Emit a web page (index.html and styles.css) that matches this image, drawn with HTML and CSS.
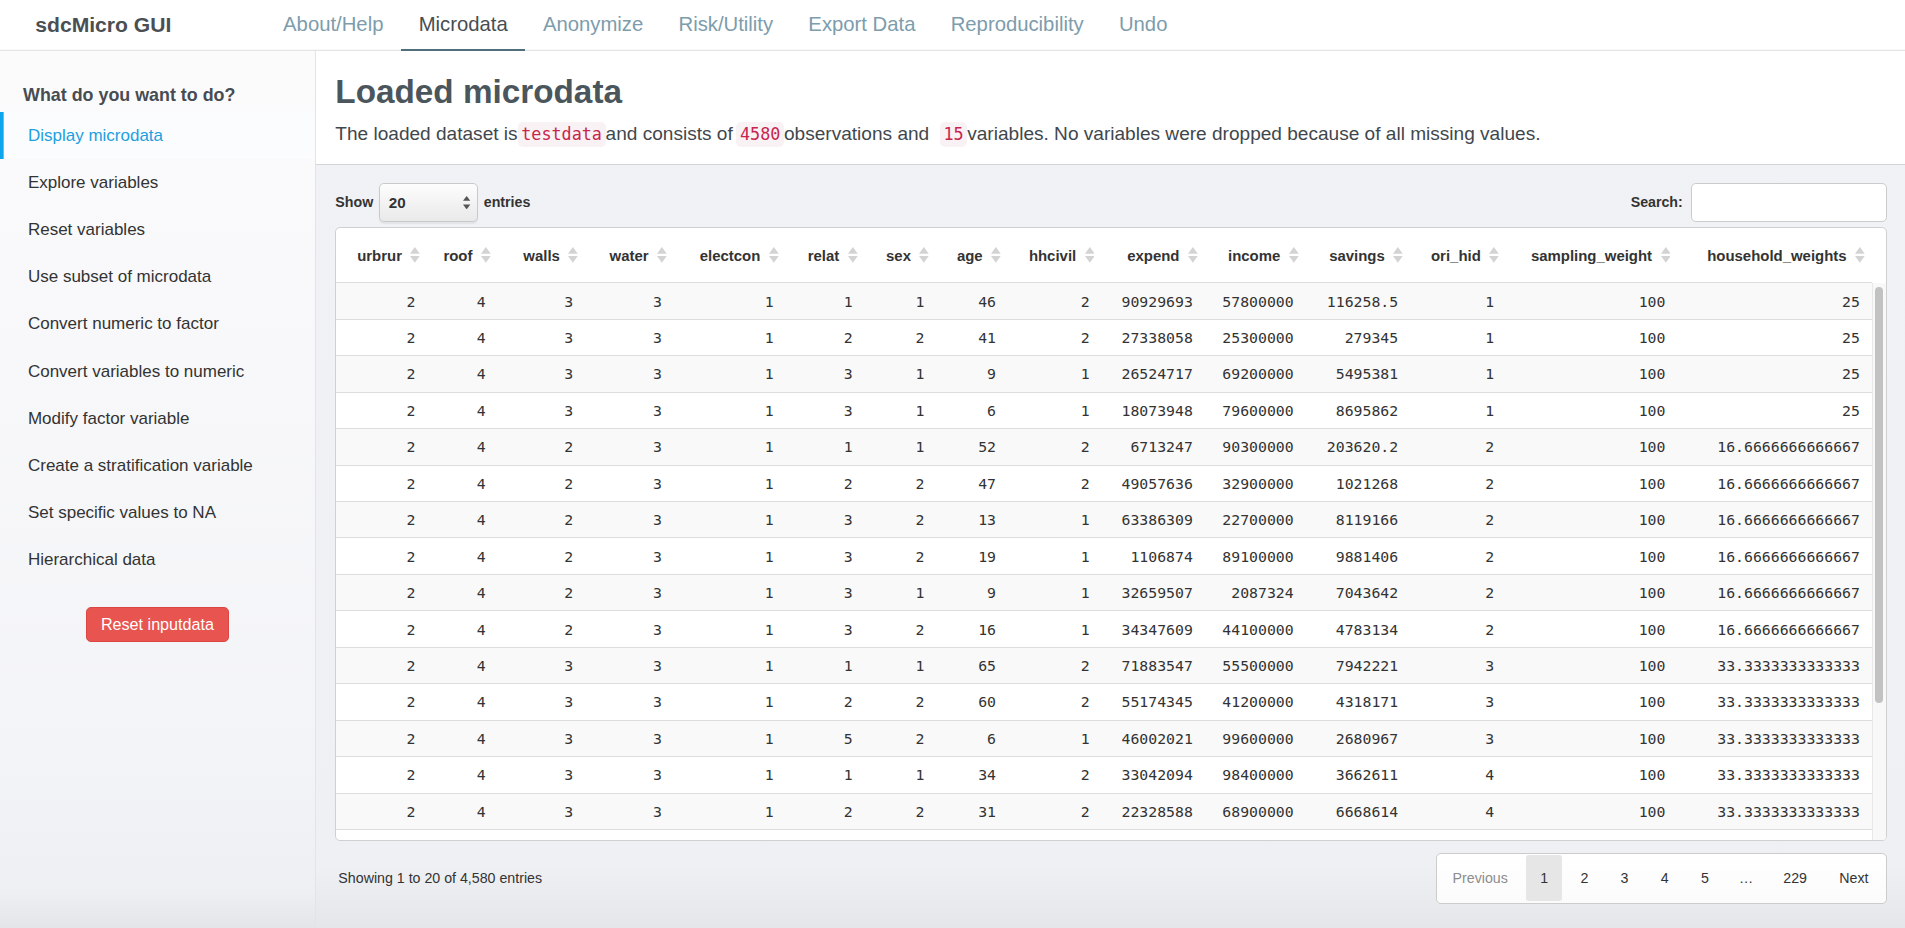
FILE: index.html
```html
<!DOCTYPE html>
<html lang="en">
<head>
<meta charset="utf-8">
<title>sdcMicro GUI</title>
<link rel="stylesheet" href="styles.css">
</head>
<body>
<header class="navbar">
  <div class="brand">sdcMicro GUI</div>
  <nav class="nav">
    <a class="nav-link">About/Help</a>
    <a class="nav-link active">Microdata</a>
    <a class="nav-link">Anonymize</a>
    <a class="nav-link">Risk/Utility</a>
    <a class="nav-link">Export Data</a>
    <a class="nav-link">Reproducibility</a>
    <a class="nav-link">Undo</a>
  </nav>
</header>
<div class="layout">
  <aside class="sidebar">
    <h4 class="side-title">What do you want to do?</h4>
    <ul class="side-menu">
      <li class="side-item active">Display microdata</li>
      <li class="side-item">Explore variables</li>
      <li class="side-item">Reset variables</li>
      <li class="side-item">Use subset of microdata</li>
      <li class="side-item">Convert numeric to factor</li>
      <li class="side-item">Convert variables to numeric</li>
      <li class="side-item">Modify factor variable</li>
      <li class="side-item">Create a stratification variable</li>
      <li class="side-item">Set specific values to NA</li>
      <li class="side-item">Hierarchical data</li>
    </ul>
    <div class="side-actions"><button class="btn-danger">Reset inputdata</button></div>
  </aside>
  <main class="main">
    <section class="page-head">
      <h2 class="page-title">Loaded microdata</h2>
      <p class="lead">The loaded dataset is<code>testdata</code>and consists of<code class="code-gap">4580</code>observations and&nbsp; <code>15</code>variables. No variables were dropped because of all missing values.</p>
    </section>
    <section class="dt">
      <div class="dt-top">
        <div class="dt-length">Show <span class="select"><span class="select-val">20</span><svg class="select-arrows" width="6" height="11" viewBox="0 0 6 11"><polygon points="0,4 3,0 6,4" fill="#555"/><polygon points="0,7 3,11 6,7" fill="#555"/></svg></span> entries</div>
        <div class="dt-search">Search:<span class="search-input"></span></div>
      </div>
      <div class="dt-box">
        <div class="dt-head">
          <table class="dt-table">
            <colgroup>
              <col class="w-urbrur"><col class="w-roof"><col class="w-walls"><col class="w-water"><col class="w-electcon"><col class="w-relat"><col class="w-sex"><col class="w-age"><col class="w-hhcivil"><col class="w-expend"><col class="w-income"><col class="w-savings"><col class="w-orihid"><col class="w-sampling"><col class="w-household">
            </colgroup>
            <thead>
              <tr>
                <th><div class="th-in">urbrur<svg class="sort" width="8" height="13" viewBox="0 0 8 13"><polygon points="0,5.5 4,0 8,5.5"/><polygon points="0,7.5 4,13 8,7.5"/></svg></div></th>
                <th><div class="th-in">roof<svg class="sort" width="8" height="13" viewBox="0 0 8 13"><polygon points="0,5.5 4,0 8,5.5"/><polygon points="0,7.5 4,13 8,7.5"/></svg></div></th>
                <th><div class="th-in">walls<svg class="sort" width="8" height="13" viewBox="0 0 8 13"><polygon points="0,5.5 4,0 8,5.5"/><polygon points="0,7.5 4,13 8,7.5"/></svg></div></th>
                <th><div class="th-in">water<svg class="sort" width="8" height="13" viewBox="0 0 8 13"><polygon points="0,5.5 4,0 8,5.5"/><polygon points="0,7.5 4,13 8,7.5"/></svg></div></th>
                <th><div class="th-in">electcon<svg class="sort" width="8" height="13" viewBox="0 0 8 13"><polygon points="0,5.5 4,0 8,5.5"/><polygon points="0,7.5 4,13 8,7.5"/></svg></div></th>
                <th><div class="th-in">relat<svg class="sort" width="8" height="13" viewBox="0 0 8 13"><polygon points="0,5.5 4,0 8,5.5"/><polygon points="0,7.5 4,13 8,7.5"/></svg></div></th>
                <th><div class="th-in">sex<svg class="sort" width="8" height="13" viewBox="0 0 8 13"><polygon points="0,5.5 4,0 8,5.5"/><polygon points="0,7.5 4,13 8,7.5"/></svg></div></th>
                <th><div class="th-in">age<svg class="sort" width="8" height="13" viewBox="0 0 8 13"><polygon points="0,5.5 4,0 8,5.5"/><polygon points="0,7.5 4,13 8,7.5"/></svg></div></th>
                <th><div class="th-in">hhcivil<svg class="sort" width="8" height="13" viewBox="0 0 8 13"><polygon points="0,5.5 4,0 8,5.5"/><polygon points="0,7.5 4,13 8,7.5"/></svg></div></th>
                <th><div class="th-in">expend<svg class="sort" width="8" height="13" viewBox="0 0 8 13"><polygon points="0,5.5 4,0 8,5.5"/><polygon points="0,7.5 4,13 8,7.5"/></svg></div></th>
                <th><div class="th-in">income<svg class="sort" width="8" height="13" viewBox="0 0 8 13"><polygon points="0,5.5 4,0 8,5.5"/><polygon points="0,7.5 4,13 8,7.5"/></svg></div></th>
                <th><div class="th-in">savings<svg class="sort" width="8" height="13" viewBox="0 0 8 13"><polygon points="0,5.5 4,0 8,5.5"/><polygon points="0,7.5 4,13 8,7.5"/></svg></div></th>
                <th><div class="th-in">ori_hid<svg class="sort" width="8" height="13" viewBox="0 0 8 13"><polygon points="0,5.5 4,0 8,5.5"/><polygon points="0,7.5 4,13 8,7.5"/></svg></div></th>
                <th><div class="th-in">sampling_weight<svg class="sort" width="8" height="13" viewBox="0 0 8 13"><polygon points="0,5.5 4,0 8,5.5"/><polygon points="0,7.5 4,13 8,7.5"/></svg></div></th>
                <th><div class="th-in">household_weights<svg class="sort" width="8" height="13" viewBox="0 0 8 13"><polygon points="0,5.5 4,0 8,5.5"/><polygon points="0,7.5 4,13 8,7.5"/></svg></div></th>
              </tr>
            </thead>
          </table>
        </div>
        <div class="dt-body-wrap">
          <div class="dt-body">
            <table class="dt-table">
              <colgroup>
                <col class="w-urbrur"><col class="w-roof"><col class="w-walls"><col class="w-water"><col class="w-electcon"><col class="w-relat"><col class="w-sex"><col class="w-age"><col class="w-hhcivil"><col class="w-expend"><col class="w-income"><col class="w-savings"><col class="w-orihid"><col class="w-sampling"><col class="w-household">
              </colgroup>
              <tbody>
                <tr><td>2</td><td>4</td><td>3</td><td>3</td><td>1</td><td>1</td><td>1</td><td>46</td><td>2</td><td>90929693</td><td>57800000</td><td>116258.5</td><td>1</td><td>100</td><td>25</td></tr>
                <tr><td>2</td><td>4</td><td>3</td><td>3</td><td>1</td><td>2</td><td>2</td><td>41</td><td>2</td><td>27338058</td><td>25300000</td><td>279345</td><td>1</td><td>100</td><td>25</td></tr>
                <tr><td>2</td><td>4</td><td>3</td><td>3</td><td>1</td><td>3</td><td>1</td><td>9</td><td>1</td><td>26524717</td><td>69200000</td><td>5495381</td><td>1</td><td>100</td><td>25</td></tr>
                <tr><td>2</td><td>4</td><td>3</td><td>3</td><td>1</td><td>3</td><td>1</td><td>6</td><td>1</td><td>18073948</td><td>79600000</td><td>8695862</td><td>1</td><td>100</td><td>25</td></tr>
                <tr><td>2</td><td>4</td><td>2</td><td>3</td><td>1</td><td>1</td><td>1</td><td>52</td><td>2</td><td>6713247</td><td>90300000</td><td>203620.2</td><td>2</td><td>100</td><td>16.6666666666667</td></tr>
                <tr><td>2</td><td>4</td><td>2</td><td>3</td><td>1</td><td>2</td><td>2</td><td>47</td><td>2</td><td>49057636</td><td>32900000</td><td>1021268</td><td>2</td><td>100</td><td>16.6666666666667</td></tr>
                <tr><td>2</td><td>4</td><td>2</td><td>3</td><td>1</td><td>3</td><td>2</td><td>13</td><td>1</td><td>63386309</td><td>22700000</td><td>8119166</td><td>2</td><td>100</td><td>16.6666666666667</td></tr>
                <tr><td>2</td><td>4</td><td>2</td><td>3</td><td>1</td><td>3</td><td>2</td><td>19</td><td>1</td><td>1106874</td><td>89100000</td><td>9881406</td><td>2</td><td>100</td><td>16.6666666666667</td></tr>
                <tr><td>2</td><td>4</td><td>2</td><td>3</td><td>1</td><td>3</td><td>1</td><td>9</td><td>1</td><td>32659507</td><td>2087324</td><td>7043642</td><td>2</td><td>100</td><td>16.6666666666667</td></tr>
                <tr><td>2</td><td>4</td><td>2</td><td>3</td><td>1</td><td>3</td><td>2</td><td>16</td><td>1</td><td>34347609</td><td>44100000</td><td>4783134</td><td>2</td><td>100</td><td>16.6666666666667</td></tr>
                <tr><td>2</td><td>4</td><td>3</td><td>3</td><td>1</td><td>1</td><td>1</td><td>65</td><td>2</td><td>71883547</td><td>55500000</td><td>7942221</td><td>3</td><td>100</td><td>33.3333333333333</td></tr>
                <tr><td>2</td><td>4</td><td>3</td><td>3</td><td>1</td><td>2</td><td>2</td><td>60</td><td>2</td><td>55174345</td><td>41200000</td><td>4318171</td><td>3</td><td>100</td><td>33.3333333333333</td></tr>
                <tr><td>2</td><td>4</td><td>3</td><td>3</td><td>1</td><td>5</td><td>2</td><td>6</td><td>1</td><td>46002021</td><td>99600000</td><td>2680967</td><td>3</td><td>100</td><td>33.3333333333333</td></tr>
                <tr><td>2</td><td>4</td><td>3</td><td>3</td><td>1</td><td>1</td><td>1</td><td>34</td><td>2</td><td>33042094</td><td>98400000</td><td>3662611</td><td>4</td><td>100</td><td>33.3333333333333</td></tr>
                <tr><td>2</td><td>4</td><td>3</td><td>3</td><td>1</td><td>2</td><td>2</td><td>31</td><td>2</td><td>22328588</td><td>68900000</td><td>6668614</td><td>4</td><td>100</td><td>33.3333333333333</td></tr>
              </tbody>
            </table>
          </div>
          <div class="scrollbar"><div class="thumb"></div></div>
        </div>
      </div>
      <div class="dt-bottom">
        <div class="dt-info">Showing 1 to 20 of 4,580 entries</div>
        <div class="pagination">
          <span class="page-btn disabled">Previous</span>
          <span class="page-btn current">1</span>
          <span class="page-btn">2</span>
          <span class="page-btn">3</span>
          <span class="page-btn">4</span>
          <span class="page-btn">5</span>
          <span class="page-ellipsis">…</span>
          <span class="page-btn">229</span>
          <span class="page-btn">Next</span>
        </div>
      </div>
    </section>
  </main>
</div>
</body>
</html>
```
FILE: styles.css
```css
html {
  zoom: 1.215;
  overflow: hidden;
}
* {
  box-sizing: border-box;
}
body {
  margin: 0;
  width: 1568px;
  height: 764px;
  overflow: hidden;
  display: flex;
  flex-direction: column;
  font-family: "Liberation Sans", Arial, sans-serif;
  color: #333;
  background: #f1f2f5;
}

/* navbar */
.navbar {
  flex: none;
  height: 42px;
  display: flex;
  background: #fff;
  box-shadow: inset 0 -1px 0 #e3e4e6;
}
.brand {
  width: 218.5px;
  padding-left: 29px;
  font-size: 17.4px;
  font-weight: bold;
  line-height: 41px;
  color: #4a4f54;
}
.nav {
  display: flex;
}
.nav-link {
  padding: 0 14.5px;
  font-size: 16.7px;
  line-height: 40px;
  color: #7d9cac;
  border-bottom: 2px solid transparent;
  text-decoration: none;
}
.nav-link.active {
  color: #474d53;
  border-bottom-color: #4f6f7c;
}

/* layout */
.layout {
  flex: 1;
  display: flex;
  min-height: 0;
}
.sidebar {
  flex: none;
  width: 260px;
  border-right: 1px solid #e2e4e8;
  background: linear-gradient(to bottom, #fbfbfc 0%, #f3f4f7 80%, #eeeff2 96%, #e4e5e8 100%);
}
.side-title {
  margin: 0 0 3.6px;
  padding: 26.5px 0 0 19px;
  font-size: 14.7px;
  line-height: 20px;
  font-weight: bold;
  color: #474c52;
}
.side-menu {
  list-style: none;
  margin: 0;
  padding: 0;
}
.side-item {
  padding-left: 23px;
  font-size: 14px;
  line-height: 38.8px;
  color: #333;
}
.side-item.active {
  color: #1e9fe0;
  background: #fbfcfd;
  box-shadow: inset 3px 0 0 #0fa5ec;
}
.side-actions {
  padding-top: 19.5px;
  text-align: center;
}
.btn-danger {
  height: 29px;
  padding: 0 11.5px;
  font-family: "Liberation Sans", Arial, sans-serif;
  font-size: 13.3px;
  color: #fff;
  background: #e8544f;
  border: 1px solid #db4642;
  border-radius: 4px;
}

/* main */
.main {
  flex: 1;
  min-width: 0;
  display: flex;
  flex-direction: column;
  background: linear-gradient(to bottom, #f1f2f5 0%, #eff0f3 93%, #e5e6e9 100%);
}
.page-head {
  padding: 20px 16px 12px;
  background: #fff;
  border-bottom: 1px solid #d3d4d7;
}
.page-title {
  margin: 0 0 9px;
  font-size: 27.4px;
  line-height: 28px;
  font-weight: bold;
  color: #4b565c;
}
.lead {
  margin: 0;
  font-size: 15.7px;
  line-height: 23px;
  color: #3f474c;
}
.lead code {
  font-family: "DejaVu Sans Mono", "Liberation Mono", monospace;
  font-size: 13.8px;
  color: #c7254e;
  background: #f9f2f4;
  padding: 2px 3px;
  border-radius: 4px;
}
.lead .code-gap {
  margin-left: 3px;
}

/* datatable */
.dt {
  padding: 15px 15px 0 16px;
}
.dt-top {
  display: flex;
  justify-content: space-between;
  align-items: center;
  height: 32px;
  margin-bottom: 4px;
  font-size: 11.7px;
  font-weight: bold;
  color: #333;
}
.dt-length {
  display: flex;
  align-items: center;
}
.select {
  display: flex;
  align-items: center;
  justify-content: space-between;
  width: 81px;
  height: 32px;
  margin: 0 5px;
  padding: 0 5px 0 7px;
  border: 1px solid #c9c9c9;
  border-radius: 4px;
  background: linear-gradient(to bottom, #fdfdfd, #e9e9e9);
  box-shadow: 0 1px 1px rgba(0, 0, 0, 0.06);
}
.select-val {
  font-size: 12.5px;
  font-weight: bold;
  color: #333;
}
.dt-search {
  display: flex;
  align-items: center;
}
.search-input {
  width: 161px;
  height: 32px;
  margin-left: 7px;
  background: #fff;
  border: 1px solid #cbcbcb;
  border-radius: 4px;
}
.dt-box {
  background: #fff;
  border: 1px solid #d0d0d0;
  border-radius: 4px;
  overflow: hidden;
}
.dt-head {
  padding-right: 11px;
}
.dt-table {
  width: 1264px;
  table-layout: fixed;
  border-collapse: separate;
  border-spacing: 0;
}
.w-urbrur { width: 75px; }
.w-roof { width: 58px; }
.w-walls { width: 72px; }
.w-water { width: 73px; }
.w-electcon { width: 92px; }
.w-relat { width: 65px; }
.w-sex { width: 59px; }
.w-age { width: 59px; }
.w-hhcivil { width: 77px; }
.w-expend { width: 85px; }
.w-income { width: 83px; }
.w-savings { width: 86px; }
.w-orihid { width: 79px; }
.w-sampling { width: 141px; }
.w-household { width: 160px; }

.dt-table th {
  padding: 0 6px 0 0;
  border-bottom: 1px solid #dcdcdc;
  font-size: 12.3px;
  font-weight: bold;
  color: #333;
  white-space: nowrap;
}
.th-in {
  display: flex;
  align-items: center;
  justify-content: flex-end;
  gap: 7px;
  height: 45px;
}
.sort {
  flex: none;
  fill: #d3d3d3;
}
.dt-body-wrap {
  display: flex;
  height: 458px;
}
.dt-body {
  flex: none;
  width: 1264px;
  overflow: hidden;
}
.dt-table td {
  padding: 0 10px;
  height: 30px;
  border-bottom: 1px solid #dddddd;
  text-align: right;
  font-family: "DejaVu Sans Mono", "Liberation Mono", monospace;
  font-size: 12.2px;
  color: #333;
  white-space: nowrap;
}
.dt-table tbody tr:nth-child(odd) td {
  background: #f9f9f9;
}
.scrollbar {
  flex: 1;
  padding: 3px 2px 0 1.5px;
  border-left: 1px solid #e8e8e8;
  background: #f8f8f8;
}
.thumb {
  height: 342px;
  border-radius: 4px;
  background: #c2c2c2;
}
.dt-bottom {
  display: flex;
  justify-content: space-between;
  align-items: center;
  margin-top: 10px;
}
.dt-info {
  padding-left: 2.5px;
  font-size: 11.7px;
  color: #333;
}
.pagination {
  display: flex;
  align-items: center;
  gap: 4px;
  padding: 1px 3px 1px 1.7px;
  border: 1px solid #cccccc;
  border-radius: 4px;
  background: linear-gradient(to bottom, #ffffff, #fbfbfb);
}
.page-btn {
  height: 38px;
  padding: 0 11.3px;
  font-size: 11.7px;
  line-height: 38px;
  color: #333;
  border-radius: 2px;
}
.page-btn.disabled {
  color: #8c8c8c;
}
.page-btn.current {
  background: #e6e6e6;
}
.page-ellipsis {
  padding: 0 9.5px;
  font-size: 11.7px;
  line-height: 38px;
  color: #333;
}
```
